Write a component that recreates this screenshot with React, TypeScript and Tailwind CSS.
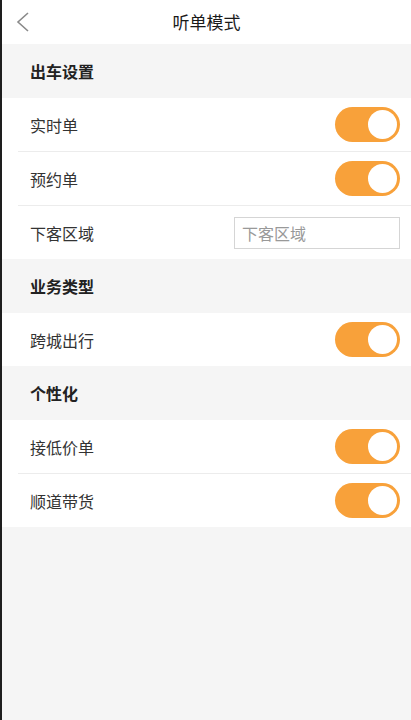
import { useState } from 'react';

const FONT = { fontFamily: '"Noto Sans CJK SC", "Noto Sans", sans-serif' };

function Toggle({ on, onChange }: { on: boolean; onChange: () => void }) {
  return (
    <button
      onClick={onChange}
      className={`w-[65px] h-[35px] rounded-full p-[3px] flex items-center ${on ? 'bg-[#f8a13a] justify-end' : 'bg-[#e5e5e5] justify-start'}`}
    >
      <span className="block w-[29px] h-[29px] rounded-full bg-white" />
    </button>
  );
}

function GroupTitle({ title }: { title: string }) {
  return (
    <div className="h-[54px] flex items-center px-[28px] bg-[#f5f5f5]">
      <span className="text-[16px] font-bold text-[#222]">{title}</span>
    </div>
  );
}

function Row({ label, last, children }: { label: string; last?: boolean; children: React.ReactNode }) {
  return (
    <div className="bg-white pl-[16px]">
      <div className={`flex flex-col ${last ? '' : 'border-b border-[#ececec]'}`}>
        <div className="h-[53px] flex items-center justify-between pl-[12px] pr-[11px]">
          <span className="text-[16px] text-[#333]">{label}</span>
          {children}
        </div>
      </div>
    </div>
  );
}

export default function App() {
  const [t, setT] = useState<Record<string, boolean>>({
    realtime: true, booking: true, cross: true, low: true, cargo: true,
  });
  const flip = (k: string) => setT((p) => ({ ...p, [k]: !p[k] }));

  return (
    <div className="flex min-h-[720px] bg-[#f5f5f5]" style={FONT}>
      <div className="w-[2px] shrink-0 bg-[#1e1e1e]" />
      <div className="flex-1 flex flex-col">
        {/* header */}
        <div className="h-[44px] bg-white flex items-center relative">
          <svg className="absolute left-[13px] top-[11px]" width="16" height="22" viewBox="0 0 16 22" fill="none" stroke="#8a8a8a" strokeWidth="1.6">
            <path d="M13 2 L3 11 L13 20" />
          </svg>
          <span className="w-full text-center text-[17px] text-[#1a1a1a] font-normal">听单模式</span>
        </div>

        <GroupTitle title="出车设置" />
        <Row label="实时单"><Toggle on={t.realtime} onChange={() => flip('realtime')} /></Row>
        <Row label="预约单"><Toggle on={t.booking} onChange={() => flip('booking')} /></Row>
        <Row label="下客区域" last>
          <input
            placeholder="下客区域"
            className="w-[166px] h-[32px] border border-[#d5d5d5] px-[7px] text-[16px] text-[#333] placeholder:text-[#999] outline-none"
            style={FONT}
          />
        </Row>

        <GroupTitle title="业务类型" />
        <Row label="跨城出行" last><Toggle on={t.cross} onChange={() => flip('cross')} /></Row>

        <GroupTitle title="个性化" />
        <Row label="接低价单"><Toggle on={t.low} onChange={() => flip('low')} /></Row>
        <Row label="顺道带货" last><Toggle on={t.cargo} onChange={() => flip('cargo')} /></Row>
      </div>
    </div>
  );
}
